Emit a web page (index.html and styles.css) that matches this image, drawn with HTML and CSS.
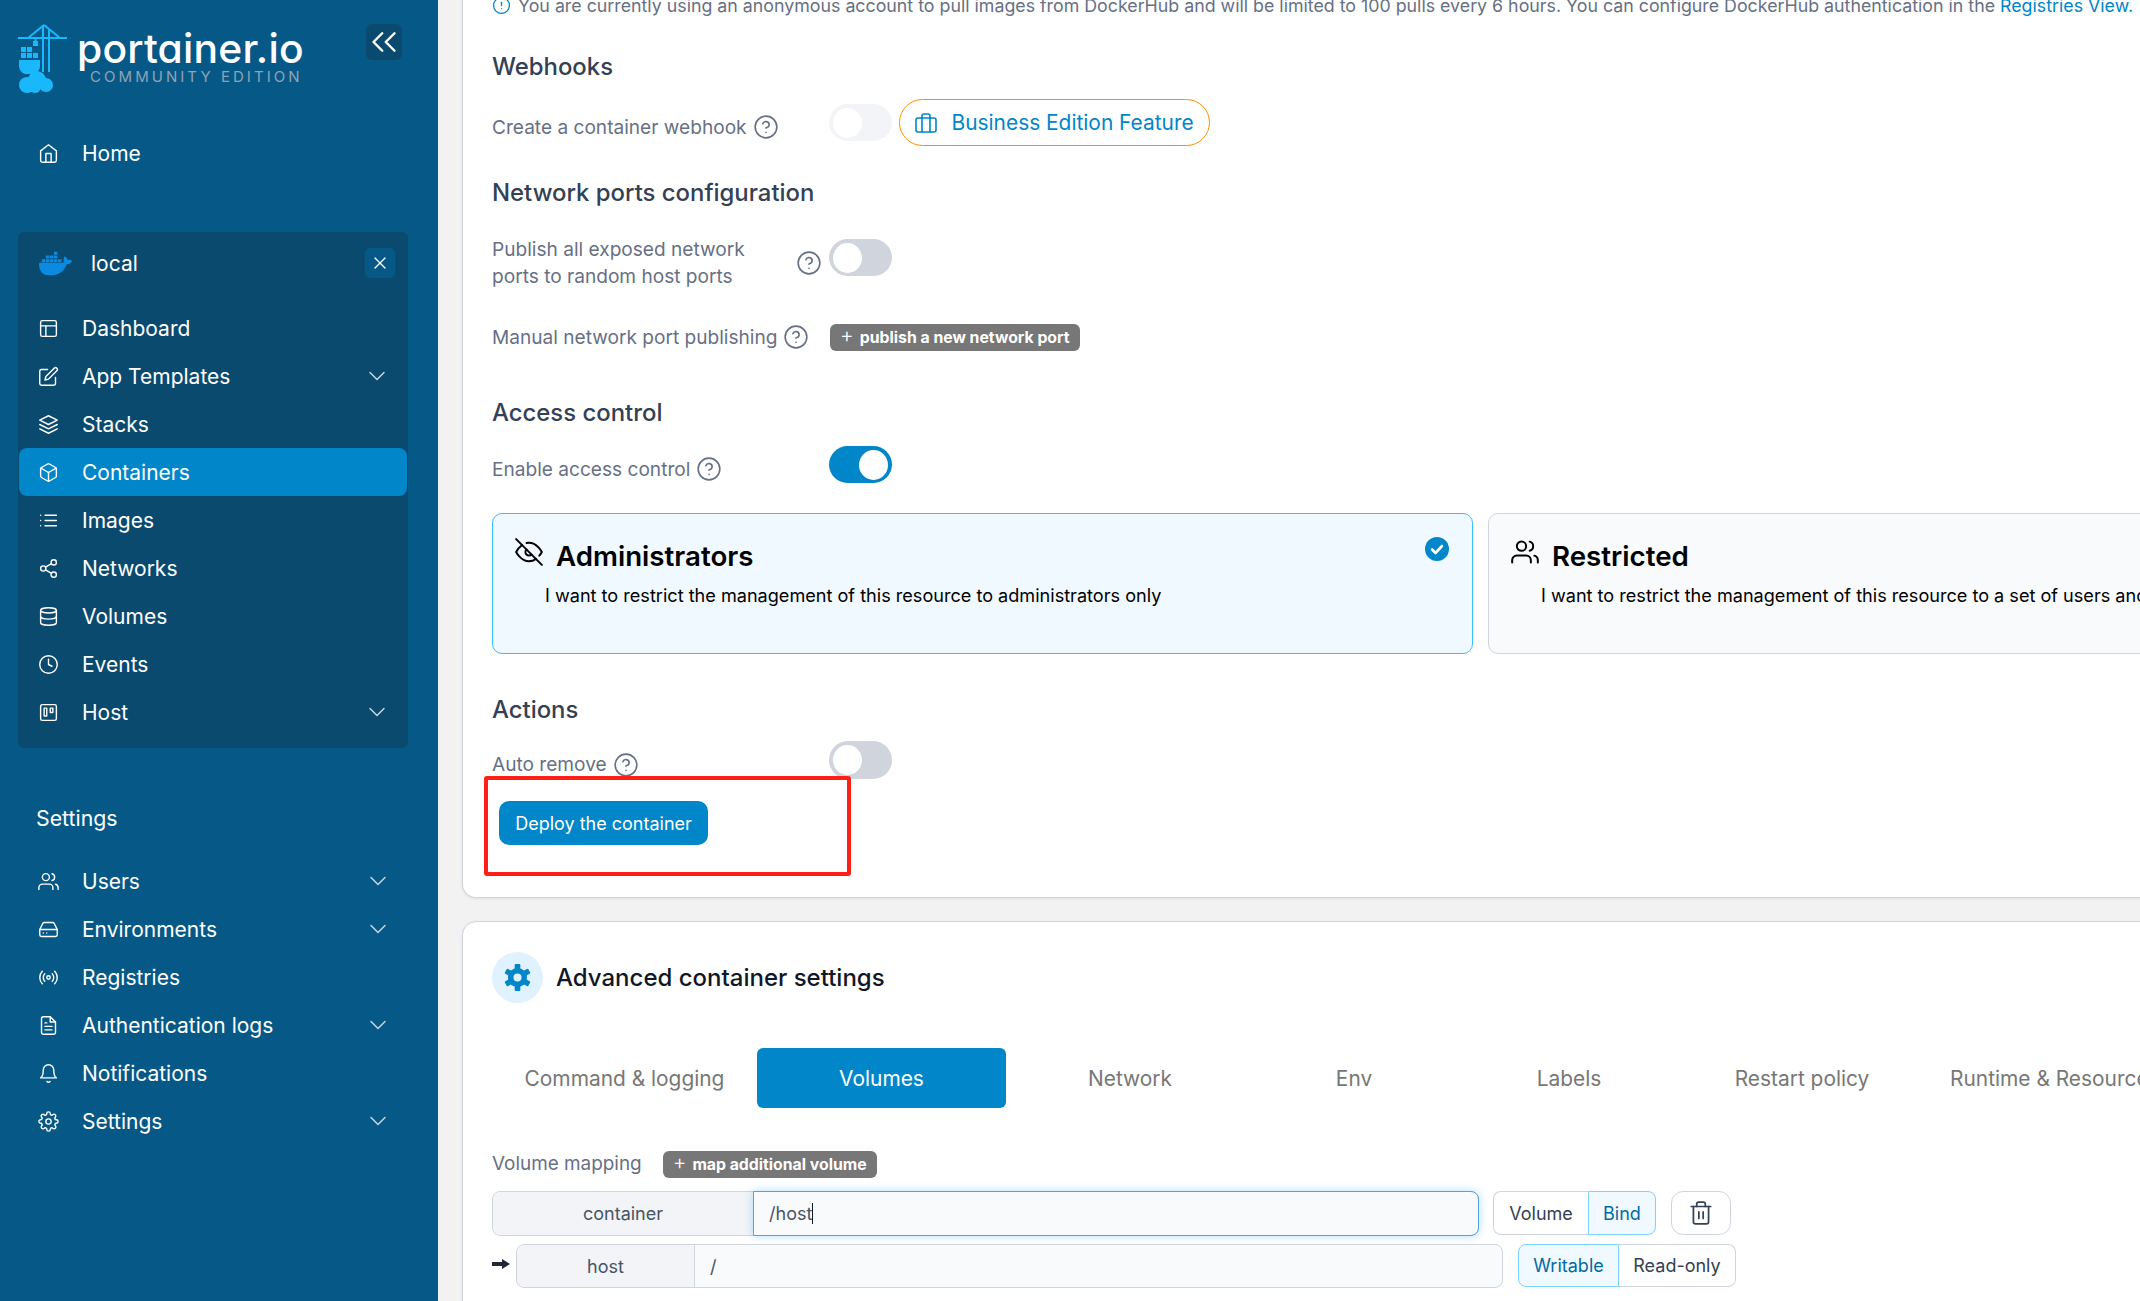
FILE: index.html
```html
<!DOCTYPE html>
<html lang="en">
<head>
<meta charset="utf-8">
<title>Portainer</title>
<link rel="stylesheet" href="styles.css">
</head>
<body>
<svg class="defs" aria-hidden="true">
  <symbol id="i-home" viewBox="0 0 24 24"><path d="M3 9l9-7 9 7v11a2 2 0 0 1-2 2H5a2 2 0 0 1-2-2z"/><polyline points="9 22 9 12 15 12 15 22"/></symbol>
  <symbol id="i-layout" viewBox="0 0 24 24"><rect x="3" y="3" width="18" height="18" rx="2"/><line x1="3" y1="9" x2="21" y2="9"/><line x1="9" y1="21" x2="9" y2="9"/></symbol>
  <symbol id="i-edit" viewBox="0 0 24 24"><path d="M11 4H4a2 2 0 0 0-2 2v14a2 2 0 0 0 2 2h14a2 2 0 0 0 2-2v-7"/><path d="M18.5 2.5a2.121 2.121 0 0 1 3 3L12 15l-4 1 1-4 9.5-9.5z"/></symbol>
  <symbol id="i-layers" viewBox="0 0 24 24"><polygon points="12 2 2 7 12 12 22 7 12 2"/><polyline points="2 17 12 22 22 17"/><polyline points="2 12 12 17 22 12"/></symbol>
  <symbol id="i-box" viewBox="0 0 24 24"><path d="M21 16V8a2 2 0 0 0-1-1.73l-7-4a2 2 0 0 0-2 0l-7 4A2 2 0 0 0 3 8v8a2 2 0 0 0 1 1.73l7 4a2 2 0 0 0 2 0l7-4A2 2 0 0 0 21 16z"/><polyline points="3.27 6.96 12 12.01 20.73 6.96"/><line x1="12" y1="22.08" x2="12" y2="12"/></symbol>
  <symbol id="i-list" viewBox="0 0 24 24"><line x1="8" y1="6" x2="21" y2="6"/><line x1="8" y1="12" x2="21" y2="12"/><line x1="8" y1="18" x2="21" y2="18"/><line x1="3" y1="6" x2="3.01" y2="6"/><line x1="3" y1="12" x2="3.01" y2="12"/><line x1="3" y1="18" x2="3.01" y2="18"/></symbol>
  <symbol id="i-share" viewBox="0 0 24 24"><circle cx="18" cy="5" r="3"/><circle cx="6" cy="12" r="3"/><circle cx="18" cy="19" r="3"/><line x1="8.59" y1="13.51" x2="15.42" y2="17.49"/><line x1="15.41" y1="6.51" x2="8.59" y2="10.49"/></symbol>
  <symbol id="i-database" viewBox="0 0 24 24"><ellipse cx="12" cy="5" rx="9" ry="3"/><path d="M21 12c0 1.66-4 3-9 3s-9-1.34-9-3"/><path d="M3 5v14c0 1.66 4 3 9 3s9-1.34 9-3V5"/></symbol>
  <symbol id="i-clock" viewBox="0 0 24 24"><circle cx="12" cy="12" r="10"/><polyline points="12 6 12 12 16 14"/></symbol>
  <symbol id="i-trello" viewBox="0 0 24 24"><rect x="3" y="3" width="18" height="18" rx="2"/><rect x="7" y="7" width="3" height="9"/><rect x="14" y="7" width="3" height="5"/></symbol>
  <symbol id="i-users" viewBox="0 0 24 24"><path d="M17 21v-2a4 4 0 0 0-4-4H5a4 4 0 0 0-4 4v2"/><circle cx="9" cy="7" r="4"/><path d="M23 21v-2a4 4 0 0 0-3-3.87"/><path d="M16 3.13a4 4 0 0 1 0 7.75"/></symbol>
  <symbol id="i-drive" viewBox="0 0 24 24"><line x1="22" y1="12" x2="2" y2="12"/><path d="M5.45 5.11L2 12v6a2 2 0 0 0 2 2h16a2 2 0 0 0 2-2v-6l-3.45-6.89A2 2 0 0 0 16.76 4H7.24a2 2 0 0 0-1.79 1.11z"/><line x1="6" y1="16" x2="6.01" y2="16"/><line x1="10" y1="16" x2="10.01" y2="16"/></symbol>
  <symbol id="i-radio" viewBox="0 0 24 24"><circle cx="12" cy="12" r="2"/><path d="M16.24 7.76a6 6 0 0 1 0 8.49m-8.48-.01a6 6 0 0 1 0-8.49m11.31-2.82a10 10 0 0 1 0 14.14m-14.14 0a10 10 0 0 1 0-14.14"/></symbol>
  <symbol id="i-file" viewBox="0 0 24 24"><path d="M14 2H6a2 2 0 0 0-2 2v16a2 2 0 0 0 2 2h12a2 2 0 0 0 2-2V8z"/><polyline points="14 2 14 8 20 8"/><line x1="16" y1="13" x2="8" y2="13"/><line x1="16" y1="17" x2="8" y2="17"/><polyline points="10 9 9 9 8 9"/></symbol>
  <symbol id="i-bell" viewBox="0 0 24 24"><path d="M18 8A6 6 0 0 0 6 8c0 7-3 9-3 9h18s-3-2-3-9"/><path d="M13.73 21a2 2 0 0 1-3.46 0"/></symbol>
  <symbol id="i-settings" viewBox="0 0 24 24"><circle cx="12" cy="12" r="3"/><path d="M19.4 15a1.65 1.65 0 0 0 .33 1.82l.06.06a2 2 0 0 1 0 2.83 2 2 0 0 1-2.83 0l-.06-.06a1.65 1.65 0 0 0-1.82-.33 1.65 1.65 0 0 0-1 1.51V21a2 2 0 0 1-2 2 2 2 0 0 1-2-2v-.09A1.65 1.65 0 0 0 9 19.4a1.65 1.65 0 0 0-1.82.33l-.06.06a2 2 0 0 1-2.83 0 2 2 0 0 1 0-2.83l.06-.06a1.65 1.65 0 0 0 .33-1.82 1.65 1.65 0 0 0-1.51-1H3a2 2 0 0 1-2-2 2 2 0 0 1 2-2h.09A1.65 1.65 0 0 0 4.6 9a1.65 1.65 0 0 0-.33-1.82l-.06-.06a2 2 0 0 1 0-2.83 2 2 0 0 1 2.83 0l.06.06a1.65 1.65 0 0 0 1.82.33H9a1.65 1.65 0 0 0 1-1.51V3a2 2 0 0 1 2-2 2 2 0 0 1 2 2v.09a1.65 1.65 0 0 0 1 1.51 1.65 1.65 0 0 0 1.82-.33l.06-.06a2 2 0 0 1 2.83 0 2 2 0 0 1 0 2.83l-.06.06a1.65 1.65 0 0 0-.33 1.82V9a1.65 1.65 0 0 0 1.51 1H21a2 2 0 0 1 2 2 2 2 0 0 1-2 2h-.09a1.65 1.65 0 0 0-1.51 1z"/></symbol>
  <symbol id="i-chevron" viewBox="0 0 24 24"><polyline points="6 9 12 15 18 9"/></symbol>
  <symbol id="i-help" viewBox="0 0 24 24"><circle cx="12" cy="12" r="10"/><path d="M9.09 9a3 3 0 0 1 5.83 1c0 2-3 3-3 3"/><line x1="12" y1="17" x2="12.01" y2="17"/></symbol>
  <symbol id="i-alert" viewBox="0 0 24 24"><circle cx="12" cy="12" r="10"/><line x1="12" y1="8" x2="12" y2="12"/><line x1="12" y1="16" x2="12.01" y2="16"/></symbol>
  <symbol id="i-briefcase" viewBox="0 0 24 24"><rect x="2" y="7" width="20" height="14" rx="2"/><path d="M16 21V5a2 2 0 0 0-2-2h-4a2 2 0 0 0-2 2v16"/></symbol>
  <symbol id="i-eyeoff" viewBox="0 0 24 24"><path d="M17.94 17.94A10.07 10.07 0 0 1 12 20c-7 0-11-8-11-8a18.45 18.45 0 0 1 5.06-5.94M9.9 4.24A9.12 9.12 0 0 1 12 4c7 0 11 8 11 8a18.5 18.5 0 0 1-2.16 3.19m-6.72-1.07a3 3 0 1 1-4.24-4.24"/><line x1="1" y1="1" x2="23" y2="23"/></symbol>
  <symbol id="i-trash" viewBox="0 0 24 24"><polyline points="3 6 5 6 21 6"/><path d="M19 6v14a2 2 0 0 1-2 2H7a2 2 0 0 1-2-2V6m3 0V4a2 2 0 0 1 2-2h4a2 2 0 0 1 2 2v2"/><line x1="10" y1="11" x2="10" y2="17"/><line x1="14" y1="11" x2="14" y2="17"/></symbol>
  <symbol id="i-x" viewBox="0 0 24 24"><line x1="18" y1="6" x2="6" y2="18"/><line x1="6" y1="6" x2="18" y2="18"/></symbol>
  <symbol id="i-chevrons-left" viewBox="0 0 24 24"><polyline points="11 17 6 12 11 7"/><polyline points="18 17 13 12 18 7"/></symbol>
</svg>

<div class="app">
  <aside class="sidebar">
    <div class="brand">
      <svg class="brand-logo" viewBox="15 20 60 80" aria-hidden="true">
        <g class="crane">
          <line x1="18" y1="38" x2="67" y2="38"/>
          <line x1="28" y1="38" x2="44" y2="25"/>
          <line x1="44" y1="25" x2="60" y2="38"/>
          <line x1="43" y1="25" x2="43" y2="72"/>
          <line x1="49" y1="30" x2="49" y2="72"/>
          <line x1="35.5" y1="38" x2="35.5" y2="41"/>
        </g>
        <g class="crane-fill">
          <rect x="33" y="41" width="5" height="5"/>
          <rect x="21" y="47" width="5" height="5"/><rect x="27" y="47" width="5" height="5"/>
          <rect x="21" y="53" width="5" height="5"/><rect x="27" y="53" width="5" height="5"/><rect x="33" y="53" width="5" height="5"/>
          <path d="M19 60h21v6c0 4-3 6-5 8h-10c-3-1-6-4-6-8z"/>
          <circle cx="27" cy="85" r="8"/><circle cx="37" cy="80" r="9"/><circle cx="46" cy="85" r="7"/><circle cx="35" cy="87" r="6"/>
        </g>
      </svg>
      <div class="brand-text">
        <div class="brand-name">portainer.io</div>
        <div class="brand-edition">COMMUNITY EDITION</div>
      </div>
      <button class="collapse-btn"><svg class="ico ico-collapse"><use href="#i-chevrons-left"/></svg></button>
    </div>

    <a class="nav-item nav-home"><svg class="ico"><use href="#i-home"/></svg><span>Home</span></a>

    <div class="env-box">
      <div class="env-head">
        <svg class="docker" viewBox="0 0 24 24" aria-hidden="true"><path d="M13.983 11.078h2.119a.186.186 0 00.186-.185V9.006a.186.186 0 00-.186-.186h-2.119a.185.185 0 00-.185.185v1.888c0 .102.083.185.185.185m-2.954-5.43h2.118a.186.186 0 00.186-.186V3.574a.186.186 0 00-.186-.185h-2.118a.185.185 0 00-.185.185v1.888c0 .102.082.185.185.186m0 2.716h2.118a.187.187 0 00.186-.186V6.29a.186.186 0 00-.186-.185h-2.118a.185.185 0 00-.185.185v1.887c0 .102.082.185.185.186m-2.93 0h2.12a.186.186 0 00.184-.186V6.29a.185.185 0 00-.185-.185H8.1a.185.185 0 00-.185.185v1.887c0 .102.083.185.185.186m-2.964 0h2.119a.186.186 0 00.185-.186V6.29a.185.185 0 00-.185-.185H5.136a.186.186 0 00-.186.185v1.887c0 .102.084.185.186.186m5.893 2.715h2.118a.186.186 0 00.186-.185V9.006a.186.186 0 00-.186-.186h-2.118a.185.185 0 00-.185.185v1.888c0 .102.082.185.185.185m-2.93 0h2.12a.185.185 0 00.184-.185V9.006a.185.185 0 00-.184-.186h-2.12a.185.185 0 00-.184.185v1.888c0 .102.083.185.185.185m-2.964 0h2.119a.185.185 0 00.185-.185V9.006a.185.185 0 00-.184-.186h-2.12a.186.186 0 00-.186.186v1.887c0 .102.084.185.186.185m-2.92 0h2.12a.185.185 0 00.184-.185V9.006a.185.185 0 00-.184-.186h-2.12a.185.185 0 00-.184.185v1.888c0 .102.082.185.185.185M23.763 9.89c-.065-.051-.672-.51-1.954-.51-.338.001-.676.03-1.01.087-.248-1.7-1.653-2.53-1.716-2.566l-.344-.199-.226.327c-.284.438-.49.922-.612 1.43-.23.97-.09 1.882.403 2.661-.595.332-1.55.413-1.744.42H.751a.751.751 0 00-.75.748 11.376 11.376 0 00.692 4.062c.545 1.428 1.355 2.48 2.41 3.124 1.18.723 3.1 1.137 5.275 1.137.983.003 1.963-.086 2.93-.266a12.248 12.248 0 003.823-1.389c.98-.567 1.86-1.288 2.61-2.136 1.252-1.418 1.998-2.997 2.553-4.4h.221c1.372 0 2.215-.549 2.68-1.009.309-.293.55-.65.707-1.046l.098-.288Z"/></svg>
        <span class="env-name">local</span>
        <button class="env-close"><svg class="ico ico-close"><use href="#i-x"/></svg></button>
      </div>
      <nav class="env-nav">
        <a class="nav-item"><svg class="ico"><use href="#i-layout"/></svg><span>Dashboard</span></a>
        <a class="nav-item"><svg class="ico"><use href="#i-edit"/></svg><span>App Templates</span><svg class="ico chev"><use href="#i-chevron"/></svg></a>
        <a class="nav-item"><svg class="ico"><use href="#i-layers"/></svg><span>Stacks</span></a>
        <a class="nav-item is-active"><svg class="ico"><use href="#i-box"/></svg><span>Containers</span></a>
        <a class="nav-item"><svg class="ico"><use href="#i-list"/></svg><span>Images</span></a>
        <a class="nav-item"><svg class="ico"><use href="#i-share"/></svg><span>Networks</span></a>
        <a class="nav-item"><svg class="ico"><use href="#i-database"/></svg><span>Volumes</span></a>
        <a class="nav-item"><svg class="ico"><use href="#i-clock"/></svg><span>Events</span></a>
        <a class="nav-item"><svg class="ico"><use href="#i-trello"/></svg><span>Host</span><svg class="ico chev"><use href="#i-chevron"/></svg></a>
      </nav>
    </div>

    <div class="nav-title">Settings</div>
    <nav class="settings-nav">
      <a class="nav-item"><svg class="ico"><use href="#i-users"/></svg><span>Users</span><svg class="ico chev"><use href="#i-chevron"/></svg></a>
      <a class="nav-item"><svg class="ico"><use href="#i-drive"/></svg><span>Environments</span><svg class="ico chev"><use href="#i-chevron"/></svg></a>
      <a class="nav-item"><svg class="ico"><use href="#i-radio"/></svg><span>Registries</span></a>
      <a class="nav-item"><svg class="ico"><use href="#i-file"/></svg><span>Authentication logs</span><svg class="ico chev"><use href="#i-chevron"/></svg></a>
      <a class="nav-item"><svg class="ico"><use href="#i-bell"/></svg><span>Notifications</span></a>
      <a class="nav-item"><svg class="ico"><use href="#i-settings"/></svg><span>Settings</span><svg class="ico chev"><use href="#i-chevron"/></svg></a>
    </nav>
  </aside>

  <main class="main">
    <section class="card card-form">
      <p class="notice"><svg class="ico-s notice-ico"><use href="#i-alert"/></svg><span>You are currently using an anonymous account to pull images from DockerHub and will be limited to 100 pulls every 6 hours. You can configure DockerHub authentication in the <a class="link">Registries View.</a></span></p>

      <h2 class="section-title title-webhooks">Webhooks</h2>
      <div class="form-row row-webhook">
        <div class="form-label label-low">Create a container webhook<svg class="help"><use href="#i-help"/></svg></div>
        <span class="switch is-disabled"></span>
        <a class="be-pill"><svg class="ico-s be-ico"><use href="#i-briefcase"/></svg>Business Edition Feature</a>
      </div>

      <h2 class="section-title">Network ports configuration</h2>
      <div class="form-row row-publish">
        <div class="form-label label-split"><span class="label-wrap">Publish all exposed network ports to random host ports</span><svg class="help"><use href="#i-help"/></svg></div>
        <span class="switch"></span>
      </div>
      <div class="form-row row-manual">
        <div class="form-label">Manual network port publishing<svg class="help"><use href="#i-help"/></svg></div>
        <button class="mini-btn"><span class="plus">+</span>publish a new network port</button>
      </div>

      <h2 class="section-title title-access">Access control</h2>
      <div class="form-row row-access">
        <div class="form-label label-low">Enable access control<svg class="help"><use href="#i-help"/></svg></div>
        <span class="switch is-on"></span>
      </div>

      <div class="options">
        <div class="option is-selected">
          <div class="option-head"><svg class="option-ico"><use href="#i-eyeoff"/></svg><strong>Administrators</strong></div>
          <p>I want to restrict the management of this resource to administrators only</p>
          <svg class="option-check" viewBox="0 0 24 24" aria-hidden="true"><circle cx="12" cy="12" r="12"/><polyline points="7 12.5 10.5 16 17 9"/></svg>
        </div>
        <div class="option">
          <div class="option-head"><svg class="option-ico"><use href="#i-users"/></svg><strong>Restricted</strong></div>
          <p>I want to restrict the management of this resource to a set of users and/or teams</p>
        </div>
      </div>

      <h2 class="section-title title-actions">Actions</h2>
      <div class="form-row row-auto">
        <div class="form-label label-low">Auto remove<svg class="help"><use href="#i-help"/></svg></div>
        <span class="switch"></span>
      </div>
      <div class="deploy">
        <button class="deploy-btn">Deploy the container</button>
        <div class="annotation"></div>
      </div>
    </section>

    <section class="card card-adv">
      <header class="adv-head">
        <span class="adv-badge">
          <svg class="gear" viewBox="0 0 24 24" aria-hidden="true">
            <g class="gear-teeth"><rect x="9.5" y="0" width="5" height="24" rx="1"/><rect x="9.5" y="0" width="5" height="24" rx="1" transform="rotate(60 12 12)"/><rect x="9.5" y="0" width="5" height="24" rx="1" transform="rotate(120 12 12)"/></g>
            <circle class="gear-ring" cx="12" cy="12" r="8.5"/><circle class="gear-hole" cx="12" cy="12" r="3.6"/>
          </svg>
        </span>
        <h2>Advanced container settings</h2>
      </header>

      <div class="tabs">
        <a class="tab">Command &amp; logging</a>
        <a class="tab is-active">Volumes</a>
        <a class="tab">Network</a>
        <a class="tab">Env</a>
        <a class="tab">Labels</a>
        <a class="tab">Restart policy</a>
        <a class="tab tab-last">Runtime &amp; Resources</a>
      </div>

      <div class="vol-head">
        <span class="vol-label">Volume mapping</span>
        <button class="mini-btn"><span class="plus">+</span>map additional volume</button>
      </div>

      <div class="vol-row">
        <div class="input-group">
          <span class="addon addon-container">container</span>
          <span class="field is-focus">/host<i class="caret"></i></span>
        </div>
        <div class="btn-group">
          <button class="seg seg-volume">Volume</button>
          <button class="seg seg-bind is-on">Bind</button>
        </div>
        <button class="trash-btn"><svg class="ico-s"><use href="#i-trash"/></svg></button>
      </div>
      <div class="vol-row vol-row-host">
        <svg class="arrow" viewBox="0 0 18 12" aria-hidden="true"><path d="M0 4h10V1l8 5-8 5V8H0z"/></svg>
        <div class="input-group">
          <span class="addon addon-host">host</span>
          <span class="field">/</span>
        </div>
        <div class="btn-group">
          <button class="seg seg-writable is-on">Writable</button>
          <button class="seg seg-readonly">Read-only</button>
        </div>
      </div>
    </section>
  </main>
</div>
</body>
</html>
```

FILE: styles.css
```css
* { box-sizing: border-box; }
html, body { margin: 0; padding: 0; width: 2140px; height: 1301px; overflow: hidden; }
body { font-family: Inter, "Liberation Sans", sans-serif; background: #f2f2f2; color: #344054; }
.defs { position: absolute; width: 0; height: 0; }
button { font: inherit; cursor: pointer; }
h2, p { margin: 0; }

.app { display: flex; height: 1301px; overflow: hidden; }

/* Sidebar */
.sidebar { flex: 0 0 438px; background: #065986; color: #fff; padding-top: 24px; }
.ico { width: 21px; height: 21px; fill: none; stroke: #fff; stroke-width: 1.6; stroke-linecap: round; stroke-linejoin: round; flex: none; }
.ico-s { fill: none; stroke: currentColor; stroke-width: 1.6; stroke-linecap: round; stroke-linejoin: round; flex: none; }

.brand { display: flex; align-items: flex-start; height: 92px; padding-left: 15px; }
.brand-logo { width: 60px; height: 80px; margin-top: -4px; flex: none; }
.crane line { stroke: #18b8fb; stroke-width: 2; }
.crane-fill { fill: #18b8fb; }
.brand-text { width: 270px; padding-left: 2px; }
.brand-name { font-size: 40.8px; line-height: 42px; font-weight: 500; letter-spacing: .2px; font-feature-settings: "cv11"; margin-top: 3px; color: #fff; }
.brand-edition { font-size: 15px; line-height: 14px; letter-spacing: 3.05px; color: #8fa3b5; padding-left: 13px; margin-top: 1px; white-space: nowrap; }
.collapse-btn { width: 36px; height: 36px; margin-left: 21px; border: 0; border-radius: 6px; background: #0b4a6f; padding: 0; display: flex; align-items: center; justify-content: center; }
.ico-collapse { width: 42px; height: 42px; stroke-width: 1.4; }

.nav-item { display: flex; align-items: center; height: 48px; color: #fff; font-size: 21px; }
.nav-item > span { margin-left: 23px; }
.nav-home { padding-left: 38px; height: 48px; margin-top: 13px; }
.ico.chev { width: 28px; height: 28px; margin-left: auto; stroke: #c6d3dd; stroke-width: 1.3; }

.env-box { width: 390px; height: 516px; margin: 55px 0 0 18px; background: #0b4a6f; border-radius: 6px; padding: 0 1px; }
.env-head { display: flex; align-items: center; height: 62px; padding: 0 12px 0 20px; }
.docker { width: 33px; height: 33px; fill: #0a8ae0; flex: none; }
.env-name { margin-left: 19px; font-size: 21px; }
.env-close { margin-left: auto; width: 30px; height: 30px; border: 0; border-radius: 5px; background: #065986; padding: 0; display: flex; align-items: center; justify-content: center; }
.ico-close { width: 20px; height: 20px; }
.env-nav { margin-top: 10px; }
.env-nav .nav-item { padding: 0 16px 0 19px; border-radius: 8px; }
.nav-item.is-active { background: #0086c9; }

.nav-title { font-size: 21.3px; line-height: 24px; margin: 58px 0 0 36px; }
.settings-nav { margin-top: 27px; }
.settings-nav .nav-item { padding: 0 46px 0 38px; }

/* Main */
.main { flex: 1; min-width: 0; height: 1301px; overflow: hidden; padding-left: 24px; }
.card { background: #fff; border: 1px solid #d0d5dd; border-radius: 14px; box-shadow: 0 1px 3px rgba(16, 24, 40, .08); padding: 0 29px; margin-right: -60px; }
.card-form { margin-top: -30px; height: 928px; padding-top: 19px; border-top: 0; }
.card-adv { margin-top: 23px; height: 500px; padding-top: 30px; }

.notice { display: flex; align-items: center; height: 32px; font-size: 17.8px; color: #667085; white-space: nowrap; }
.notice-ico { width: 19px; height: 19px; color: #0086c9; margin-right: 7px; }
.link { color: #0086c9; }

.section-title { font-size: 23.9px; line-height: 30px; font-weight: 500; color: #344054; margin-top: 32px; }
.title-webhooks { margin-top: 31px; }
.title-access { margin-top: 46px; }
.title-actions { margin-top: 41px; }

.form-row { display: flex; align-items: center; }
.form-label { width: 337px; flex: none; display: flex; align-items: center; font-size: 19.1px; color: #667085; line-height: 27px; white-space: nowrap; }
.label-low { padding-top: 9px; }
.help { width: 26px; height: 26px; margin-left: 6px; fill: none; stroke: #667085; stroke-width: 1.5; stroke-linecap: round; stroke-linejoin: round; flex: none; }
.row-webhook { height: 47px; margin-top: 17px; }
.row-publish { margin-top: 28px; align-items: flex-start; height: 55px; }
.label-split { justify-content: space-between; padding-right: 7px; }
.label-wrap { width: 280px; white-space: normal; }
.row-publish .switch { margin-top: 3px; }
.row-manual { height: 30px; margin-top: 31px; }
.row-manual .mini-btn { margin-left: 1px; }
.row-access { height: 37px; margin-top: 18px; }
.row-auto { height: 38px; margin-top: 16px; }
.row-auto .switch { height: 38px; }

.switch { width: 63px; height: 37px; flex: none; border-radius: 19px; background: #d0d5dd; display: flex; align-items: center; padding: 0 4px; }
.switch::after { content: ""; width: 29px; height: 30px; border-radius: 50%; background: #fff; }
.switch.is-disabled { background: #f2f4f7; }
.switch.is-on { background: #0086c9; justify-content: flex-end; }

.be-pill { height: 47px; width: 311px; margin-left: 7px; border: 1.5px solid #f79009; border-radius: 24px; display: flex; align-items: center; padding-left: 13.5px; color: #0086c9; font-size: 20.9px; white-space: nowrap; }
.be-ico { width: 24px; height: 24px; margin-right: 14px; }

.mini-btn { height: 27px; border: 0; border-radius: 6px; background: #777; color: #fff; font-size: 15.8px; font-weight: 700; padding: 0 10px 0 10px; display: inline-flex; align-items: center; white-space: nowrap; flex: none; }
.plus { font-weight: 300; margin-right: 6px; font-size: 21px; position: relative; top: -3px; }

.options { display: flex; gap: 15px; margin-top: 30px; }
.option { flex: none; height: 141px; border: 1px solid #d0d5dd; border-radius: 10px; background: #f9fafb; color: #000; position: relative; padding: 24px 0 0 22px; width: 1000px; }
.option.is-selected { width: 981px; background: #f0f9ff; border-color: #36bffa; }
.option-head { display: flex; align-items: flex-start; height: 44px; }
.option-head strong { font-size: 27.7px; line-height: 36px; font-weight: 600; margin-left: 13px; }
.option-ico { width: 28px; height: 28px; fill: none; stroke: #000; stroke-width: 1.7; stroke-linecap: round; stroke-linejoin: round; flex: none; }
.option p { font-size: 18.1px; line-height: 27px; margin: 0 0 0 30px; white-space: nowrap; }
.option-check { position: absolute; top: 23px; right: 23px; width: 24px; height: 24px; }
.option-check circle { fill: #0086c9; }
.option-check polyline { fill: none; stroke: #fff; stroke-width: 2.6; stroke-linecap: round; stroke-linejoin: round; }

.deploy { position: relative; margin: 22px 0 0 7px; width: 209px; }
.deploy-btn { width: 209px; height: 44px; border: 0; border-radius: 10px; background: #0086c9; color: #fff; font-size: 18px; padding: 0; display: block; }
.annotation { position: absolute; left: -15px; top: -25px; width: 367px; height: 100px; border: 4px solid #ff2015; border-radius: 3px; }

.adv-head { display: flex; align-items: center; height: 51px; }
.adv-badge { width: 51px; height: 51px; border-radius: 50%; background: #e0f2fe; display: flex; align-items: center; justify-content: center; flex: none; }
.gear { width: 27px; height: 27px; }
.gear-teeth, .gear-ring { fill: #0086c9; }
.gear-hole { fill: #e0f2fe; }
.adv-head h2 { font-size: 24px; line-height: 30px; font-weight: 500; color: #101828; margin-left: 13px; }

.tabs { display: grid; grid-template-columns: 265px 249px 248px 200px 230px 236px 300px; height: 60px; margin-top: 45px; }
.tab { display: flex; align-items: center; justify-content: center; font-size: 20.9px; color: #777; white-space: nowrap; border-radius: 6px; }
.tab.is-active { background: #0086c9; color: #fff; }
.tab-last { justify-content: flex-start; padding-left: 30px; }

.vol-head { display: flex; align-items: center; height: 27px; margin-top: 43px; color: #667085; }
.vol-label { font-size: 18.9px; padding-bottom: 3px; }
.vol-head .mini-btn { margin-left: 21px; }

.vol-row { display: flex; height: 45px; margin-top: 13px; font-size: 18px; }
.vol-row-host { height: 44px; margin-top: 8px; align-items: stretch; }
.input-group { width: 987px; display: flex; flex: none; border: 1px solid #d0d5dd; border-radius: 8px; background: #f9fafb; }
.addon { display: flex; align-items: center; justify-content: center; background: #f2f4f7; color: #475467; border-radius: 8px 0 0 8px; flex: none; }
.addon-container { width: 260px; }
.addon-host { width: 178px; border-right: 1px solid #d0d5dd; }
.field { flex: 1; display: flex; align-items: center; padding-left: 15px; color: #475467; }
.field.is-focus { margin: -1px -1px -1px 0; border: 1px solid #53a3dd; border-radius: 0 8px 8px 0; box-shadow: 0 0 8px rgba(83, 177, 253, .45); }
.caret { width: 1px; height: 21px; background: #101828; }

.btn-group { display: flex; flex: none; margin-left: 14px; height: 44px; }
.vol-row-host .btn-group { margin-left: 15px; height: 43px; }
.seg { background: #fff; border: 1px solid #d0d5dd; color: #344054; padding: 0; height: 100%; }
.seg.is-on { background: #f0f9ff; border-color: #7cd4fd; color: #026aa2; }
.seg-volume { width: 95px; border-right: 0; border-radius: 8px 0 0 8px; }
.seg-bind { width: 68px; border-radius: 0 8px 8px 0; }
.seg-writable { width: 101px; border-radius: 8px 0 0 8px; }
.seg-readonly { width: 117px; border-left: 0; border-radius: 0 8px 8px 0; }
.trash-btn { width: 60px; height: 44px; margin-left: 15px; border: 1px solid #d0d5dd; border-radius: 12px; background: #fff; color: #344054; padding: 0; display: flex; align-items: center; justify-content: center; }
.trash-btn .ico-s { width: 26px; height: 26px; stroke-width: 1.6; }
.arrow { width: 18px; height: 12px; fill: #1d2939; flex: none; margin: 14px 6px 0 0; align-self: flex-start; }
```
